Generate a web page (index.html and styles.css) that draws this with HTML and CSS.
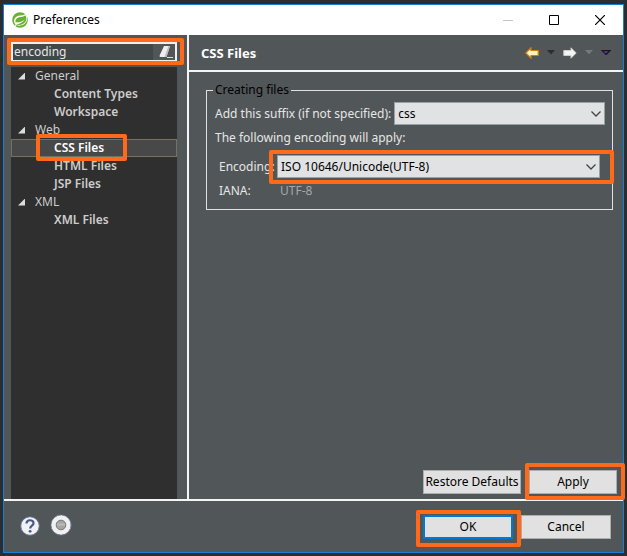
FILE: index.html
```html
<!DOCTYPE html>
<html lang="en">
<head>
    <meta charset="UTF-8">
    <meta name="viewport" content="width=device-width, initial-scale=1.0">
    <title>Preferences</title>
    <link rel="stylesheet" href="styles.css">
</head>
<body>
    <div class="window">
        <header class="titlebar">
            <svg class="logo" width="16" height="16" viewBox="0 0 16 16">
                <circle cx="8" cy="8" r="7.800" fill="#68b132"/>
                <path d="M14.200 1.500C12.500 3.500 9 3.200 6.500 3.800C3 4.800 1.500 7.500 2.200 10.300C3 13 5.500 13.800 8 13.600C12 13.200 15.300 10.500 15.200 6C15.200 4.300 14.800 2.700 14.200 1.500Z" fill="#fff"/>
                <path d="M13.500 3.300C11.500 5.300 9 4.700 6.500 5.500C4 6.300 3 8.200 3.500 10.300C8 10.500 11 9.500 13 7C11.500 10.200 8.500 11.700 4.300 12.200C7 13.800 11 12.800 13.300 10C15 7.800 14.500 5 13.500 3.300Z" fill="#68b132"/>
                <circle cx="3.500" cy="13.200" r="0.800" fill="#fff"/>
            </svg>
            <h1>Preferences</h1>
            <div class="window-buttons">
                <button type="button" aria-label="Minimize" disabled>
                    <svg width="10" height="10"><path d="M0 5.500H10" stroke="#c4c4c4"/></svg>
                </button>
                <button type="button" aria-label="Maximize">
                    <svg width="10" height="10"><path d="M.5.5H9.500V9.500H.5Z" fill="none" stroke="#000"/></svg>
                </button>
                <button type="button" aria-label="Close">
                    <svg width="10" height="10"><path d="M0 0L10 10M10 0L0 10" stroke="#000" stroke-width="1.200"/></svg>
                </button>
            </div>
        </header>

        <div class="content">
            <nav class="sidebar">
                <div class="search mark">
                    <input type="text" value="encoding" aria-label="Filter">
                    <button type="button" aria-label="Clear">
                        <svg width="14" height="12" viewBox="0 0 14 12">
                            <path d="M5 0H11L7.500 11H1.500Q0 11 .8 9Z" fill="#eee"/>
                            <path d="M9.500 0H11L7.500 11H5.500Z" fill="#bbb"/>
                            <path d="M8 11.500H14" stroke="#ddd"/>
                        </svg>
                    </button>
                </div>
                <ul class="tree">
                    <li class="group">General</li>
                    <li><a href="#">Content Types</a></li>
                    <li><a href="#">Workspace</a></li>
                    <li class="group">Web</li>
                    <li class="selected"><a class="mark" href="#">CSS Files</a></li>
                    <li><a href="#">HTML Files</a></li>
                    <li><a href="#">JSP Files</a></li>
                    <li class="group">XML</li>
                    <li><a href="#">XML Files</a></li>
                </ul>
            </nav>

            <main class="page">
                <div class="page-header">
                    <h2>CSS Files</h2>
                    <div class="page-nav">
                        <button type="button" aria-label="Back">
                            <svg width="14" height="12" viewBox="0 0 14 12"><path d="M.8 6L6 .8V3.500H13.200V8.500H6V11.200Z" fill="#fff3c4" stroke="#c88213" stroke-width="1.200"/></svg>
                        </button>
                        <button type="button" aria-label="Back history">
                            <svg width="8" height="5"><path d="M0 0H8L4 4.500Z" fill="#2b2d2e"/></svg>
                        </button>
                        <button type="button" aria-label="Forward">
                            <svg width="14" height="12" viewBox="0 0 14 12"><path d="M13.200 6L8 .8V3.500H.8V8.500H8V11.200Z" fill="#f4f4f4" stroke="#ccc"/></svg>
                        </button>
                        <button type="button" aria-label="Forward history">
                            <svg width="8" height="5"><path d="M0 0H8L4 4.500Z" fill="#75797b"/></svg>
                        </button>
                        <button type="button" aria-label="Menu">
                            <svg width="10" height="5"><path d="M1 .5H9L5 4.500Z" fill="#55505c" stroke="#1c1226" stroke-width="1.400"/><path d="M1 .5L5 4.500" stroke="#4a1a8a"/></svg>
                        </button>
                    </div>
                </div>

                <fieldset class="files">
                    <legend>Creating files</legend>
                    <div class="field">
                        <label for="suffix">Add this suffix (if not specified):</label>
                        <div class="combo">
                            <select id="suffix"><option>css</option></select>
                            <svg width="10" height="6"><path d="M.5.5L5 5L9.500.5" fill="none" stroke="#444" stroke-width="1.300"/></svg>
                        </div>
                    </div>
                    <p>The following encoding will apply:</p>
                    <div class="encoding">
                        <label for="encoding">Encoding:</label>
                        <div class="combo mark">
                            <select id="encoding"><option>ISO 10646/Unicode(UTF-8)</option></select>
                            <svg width="10" height="6"><path d="M.5.5L5 5L9.500.5" fill="none" stroke="#444" stroke-width="1.300"/></svg>
                        </div>
                        <span>IANA:</span>
                        <span class="iana">UTF-8</span>
                    </div>
                </fieldset>

                <div class="page-actions">
                    <button type="button" class="btn btn-wide">Restore Defaults</button>
                    <button type="button" class="btn mark">Apply</button>
                </div>
            </main>
        </div>

        <footer class="footer">
            <button type="button" class="round" aria-label="Help">
                <svg width="20" height="20" viewBox="0 0 20 20">
                    <circle cx="10" cy="10" r="9.300" fill="#f1f1f3" stroke="#5a6b91"/>
                    <path d="M6.500 7.500C6.500 3.200 13.500 3.200 13.500 7.200C13.500 9.700 10.200 9.700 10.200 12.500" fill="none" stroke="#465a85" stroke-width="2.200"/>
                    <circle cx="10.100" cy="15.300" r="1.400" fill="#465a85"/>
                </svg>
            </button>
            <button type="button" class="round" aria-label="Record">
                <svg width="22" height="22" viewBox="0 0 22 22">
                    <circle cx="11" cy="11" r="10" fill="#f0f0f0" stroke="#6d7f9e" stroke-dasharray="3 1"/>
                    <circle cx="11" cy="11" r="4.800" fill="#a5a5a5" stroke="#777"/>
                    <path d="M7 10.500H15" stroke="#bbb" stroke-width="2"/>
                </svg>
            </button>
            <div class="dialog-actions">
                <button type="button" class="btn btn-default mark">OK</button>
                <button type="button" class="btn">Cancel</button>
            </div>
        </footer>
    </div>
</body>
</html>
```
FILE: styles.css
```css
* {
    margin: 0;
    padding: 0;
    box-sizing: border-box;
}

body {
    min-height: 100vh;
    display: flex;
    padding: 4px 3px 3px;
    background: #2b2d2f;
    color: #e6e6e6;
    font-family: "Noto Sans", "Noto Sans CJK KR", sans-serif;
    font-size: 12px;
    line-height: 18px;
}

button,
input,
select {
    font: inherit;
}

button {
    border: none;
    background: none;
}

svg {
    display: block;
}

.window {
    flex: 1;
    display: flex;
    flex-direction: column;
    border: 1px solid #1a7fd4;
    background: #515658;
}

/* orange frames over the controls */
.mark {
    position: relative;
}

.mark::after {
    content: "";
    position: absolute;
    inset: -6px -9px -5px -6px;
    border: 4px solid #ff6a1a;
    border-radius: 2px;
    pointer-events: none;
    z-index: 1;
}

/* title bar */
.titlebar {
    display: flex;
    align-items: center;
    height: 30px;
    padding-left: 8px;
    background: #fff;
    color: #000;
}

.titlebar h1 {
    margin-left: 5px;
    font-size: 12px;
    font-weight: normal;
}

.window-buttons {
    display: flex;
    margin-left: auto;
}

.window-buttons button {
    width: 46px;
    height: 28px;
    display: flex;
    align-items: center;
    justify-content: center;
}

/* left side */
.content {
    flex: 1;
    display: flex;
    border-bottom: 2px solid #f4f4f4;
}

.sidebar {
    flex: 0 0 185px;
    min-width: 0;
    display: flex;
    flex-direction: column;
    padding: 7px 10px 0 7px;
    border-right: 2px solid #f4f4f4;
}

.search {
    display: flex;
    height: 20px;
    margin-bottom: 5px;
    border: 2px solid #f0f0f0;
    background: #42474a;
}

.search input {
    flex: 1;
    width: 0;
    min-width: 0;
    padding-left: 1px;
    border: none;
    outline: none;
    background: none;
    color: #e6e6e6;
}

.search button {
    flex: none;
    width: 22px;
    padding-left: 6px;
    background: #515658;
}

.tree {
    flex: 1;
    background: #2f2f2f;
    color: #ccc;
    list-style: none;
}

.tree li {
    height: 18px;
    padding-left: 43px;
    line-height: 18px;
    font-weight: 600;
}

.tree .group {
    display: flex;
    align-items: center;
    gap: 10px;
    padding-left: 7px;
    font-weight: normal;
}

.group::before {
    content: "";
    width: 7px;
    height: 7px;
    background: #ddd;
    clip-path: polygon(100% 0, 100% 100%, 0 100%);
}

.tree a {
    color: inherit;
    text-decoration: none;
}

.tree .selected {
    background: #484848;
    color: #fff;
    outline: 1px solid #77725f;
    outline-offset: -1px;
}

.tree .mark::after {
    inset: -5px -23px -5px -18px;
}

/* right side */
.page {
    flex: 1;
    display: flex;
    flex-direction: column;
}

.page-header {
    display: flex;
    align-items: center;
    height: 37px;
    padding: 0 12px;
    border-bottom: 2px solid #f4f4f4;
}

.page-header h2 {
    font-size: 13px;
    font-weight: 700;
    color: #fff;
}

.page-nav {
    display: flex;
    align-items: center;
    gap: 8px;
    margin-left: auto;
}

.files {
    margin: 9px 10px 0 17px;
    padding: 3px 7px 9px 8px;
    border: 1px solid #e0e0e0;
}

.files legend {
    padding: 0 2px;
    margin-left: -2px;
    color: #000;
}

.field {
    display: flex;
    align-items: center;
    gap: 3px;
}

.files p {
    margin: 4px 0 8px;
}

.combo {
    flex: 1;
    display: flex;
    align-items: center;
}

.combo select {
    width: 100%;
    height: 23px;
    padding: 0 20px 0 3px;
    border: 1px solid #98a1a8;
    border-radius: 0;
    background: #e1e2e4;
    color: #000;
    appearance: none;
}

.combo svg {
    flex: none;
    margin-left: -14px;
    margin-right: 4px;
    pointer-events: none;
    z-index: 1;
}

.encoding {
    display: grid;
    grid-template-columns: 54px 1fr;
    align-items: center;
    gap: 4px;
    padding: 0 5px 0 4px;
}

.encoding label {
    white-space: nowrap;
}

.encoding .mark::after {
    inset: -5px -14px -6px -8px;
}

.iana {
    padding-left: 3px;
    color: #a5a8aa;
}

.btn {
    width: 90px;
    height: 24px;
    border: 1px solid #adadad;
    background: #e1e1e1;
    color: #000;
}

.btn-wide {
    width: 98px;
    white-space: nowrap;
}

.btn-default {
    border: 2px solid #0078d7;
}

.page-actions,
.dialog-actions {
    display: flex;
    gap: 8px;
}

.page-actions {
    justify-content: flex-end;
    margin-top: auto;
    padding: 0 6px 5px;
}

.page-actions .btn:last-child {
    width: 88px;
}

.page-actions .mark::after {
    inset: -8px -9px -7px -5px;
}

/* bottom bar */
.footer {
    display: flex;
    align-items: center;
    gap: 10px;
    height: 51px;
    padding: 0 12px 0 16px;
}

.footer .round:first-child {
    padding-bottom: 2px;
}

.footer .round {
    padding-bottom: 3px;
}

.dialog-actions {
    margin-left: auto;
}

.dialog-actions .mark::after {
    inset: -7px -10px -10px -9px;
}
```
